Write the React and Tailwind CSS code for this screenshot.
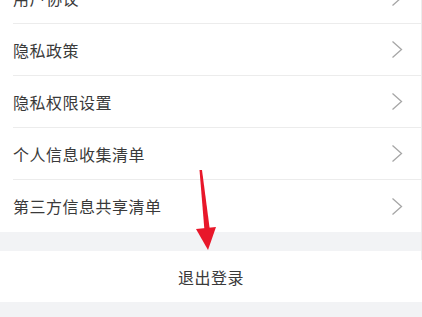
import React from 'react';

const items = ['用户协议', '隐私政策', '隐私权限设置', '个人信息收集清单', '第三方信息共享清单'];

function Chevron() {
  return (
    <svg width="12" height="19" viewBox="0 0 12 19" className="shrink-0">
      <path d="M1.5 1.5 L10.5 9.5 L1.5 17.5" fill="none" stroke="#a6a6a6" strokeWidth="1.3" />
    </svg>
  );
}

export default function App() {
  return (
    <div
      className="relative w-[422px] h-[317px] overflow-hidden bg-[#f2f3f5]"
      style={{ fontFamily: '"Noto Sans CJK SC", "Noto Sans", sans-serif' }}
    >
      <div className="-mt-[28px] bg-white">
        {items.map((t, i) => (
          <div key={t} className="pl-[13px]">
            <div
              className={
                'h-[52px] flex items-center justify-between pr-[19px] ' +
                (i < items.length - 1 ? 'border-b border-[#ececec]' : '')
              }
            >
              <span className="text-[16px] text-[#3a3a3a] tracking-[0.5px]">{t}</span>
              <Chevron />
            </div>
          </div>
        ))}
      </div>
      <div className="h-[19px]" />
      <div className="h-[51px] bg-white flex items-center justify-center">
        <span className="text-[16px] text-[#3a3a3a] tracking-[0.5px]">退出登录</span>
      </div>

      <div className="absolute top-0 right-0 w-px h-[260px] bg-[#ececec]" />

      <svg className="absolute top-0 left-0" width="422" height="317" viewBox="0 0 422 317">
        <polygon points="199.5,170 202,170 210,231 204.5,231" fill="#e8172a" />
        <polygon points="196,229 216,227 208,250" fill="#e8172a" />
      </svg>
    </div>
  );
}
